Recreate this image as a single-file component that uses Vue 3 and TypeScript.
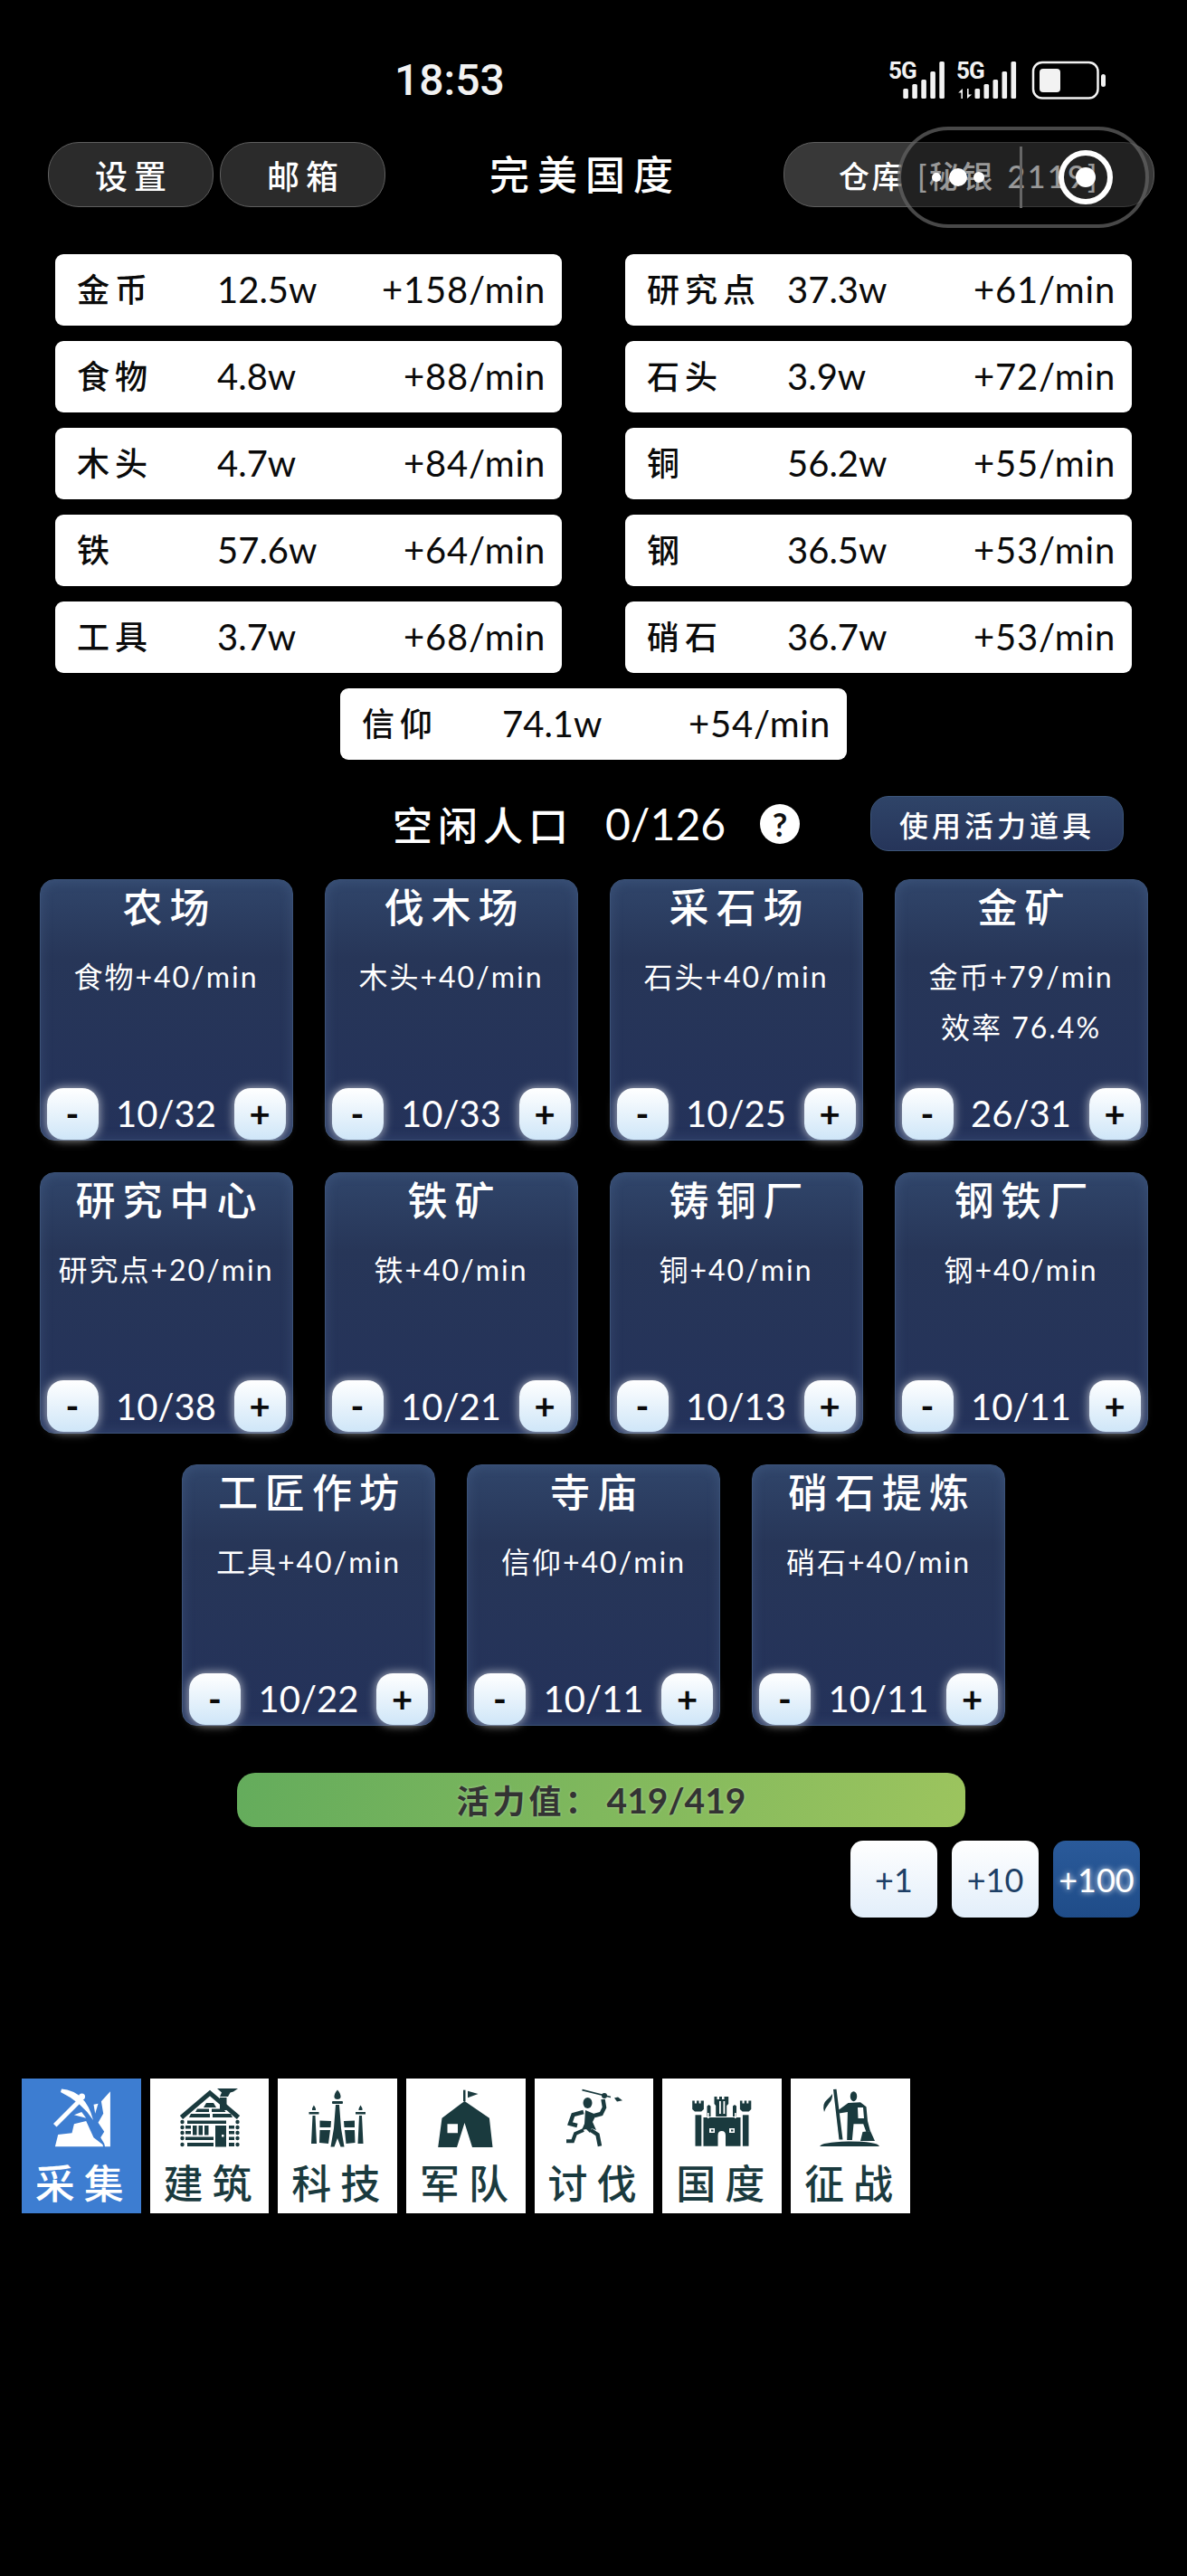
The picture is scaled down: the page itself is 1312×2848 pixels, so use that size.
<script setup lang="ts">
interface Resource { name: string; amount: string; rate: string }
interface Building { name: string; lines: string[]; count: string }

const resources: Resource[] = [
  { name: '金币', amount: '12.5w', rate: '+158/min' },
  { name: '研究点', amount: '37.3w', rate: '+61/min' },
  { name: '食物', amount: '4.8w', rate: '+88/min' },
  { name: '石头', amount: '3.9w', rate: '+72/min' },
  { name: '木头', amount: '4.7w', rate: '+84/min' },
  { name: '铜', amount: '56.2w', rate: '+55/min' },
  { name: '铁', amount: '57.6w', rate: '+64/min' },
  { name: '钢', amount: '36.5w', rate: '+53/min' },
  { name: '工具', amount: '3.7w', rate: '+68/min' },
  { name: '硝石', amount: '36.7w', rate: '+53/min' },
  { name: '信仰', amount: '74.1w', rate: '+54/min' },
]

const buildings: Building[] = [
  { name: '农场', lines: ['食物+40/min'], count: '10/32' },
  { name: '伐木场', lines: ['木头+40/min'], count: '10/33' },
  { name: '采石场', lines: ['石头+40/min'], count: '10/25' },
  { name: '金矿', lines: ['金币+79/min', '效率 76.4%'], count: '26/31' },
  { name: '研究中心', lines: ['研究点+20/min'], count: '10/38' },
  { name: '铁矿', lines: ['铁+40/min'], count: '10/21' },
  { name: '铸铜厂', lines: ['铜+40/min'], count: '10/13' },
  { name: '钢铁厂', lines: ['钢+40/min'], count: '10/11' },
  { name: '工匠作坊', lines: ['工具+40/min'], count: '10/22' },
  { name: '寺庙', lines: ['信仰+40/min'], count: '10/11' },
  { name: '硝石提炼', lines: ['硝石+40/min'], count: '10/11' },
]

const boosts = ['+1', '+10', '+100']
</script>

<template>
  <div class="page">
    <div class="status">
      <span class="clock">18:53</span>
      <svg class="status-icons" width="245" height="62" viewBox="980 50 245 62">
        <g fill="#f2f2f2">
          <text x="982" y="87" class="net">5G</text>
          <rect x="998.3" y="98" width="5.6" height="11" rx="1.5" />
          <rect x="1008.3" y="93" width="5.6" height="16" rx="1.5" />
          <rect x="1018.3" y="88" width="5.6" height="21" rx="1.5" />
          <rect x="1028.3" y="79" width="5.6" height="30" rx="1.5" />
          <rect x="1038.3" y="68" width="5.6" height="41" rx="1.5" />
          <text x="1057" y="87" class="net">5G</text>
          <path d="M1064 98v11h-1.6v-6.5h-3.2zM1069 109V98h1.6v6.5h3.6z" />
          <rect x="1077.5" y="98" width="5.6" height="11" rx="1.5" />
          <rect x="1087.5" y="93" width="5.6" height="16" rx="1.5" />
          <rect x="1097.5" y="88" width="5.6" height="21" rx="1.5" />
          <rect x="1107.5" y="79" width="5.6" height="30" rx="1.5" />
          <rect x="1117.5" y="68" width="5.6" height="41" rx="1.5" />
          <rect x="1149" y="76" width="23" height="26" rx="4" />
          <rect x="1217" y="82" width="5" height="14" rx="2.5" />
        </g>
        <rect x="1142" y="69" width="71.500" height="39.500" rx="10" fill="none" stroke="#f2f2f2" stroke-width="2.500" />
      </svg>
    </div>

    <header class="topbar">
      <button class="pill">设置</button>
      <button class="pill">邮箱</button>
      <h1 class="kingdom">完美国度</h1>
      <button class="pill store">仓库 [秘银 2119]</button>
      <div class="capsule">
        <span class="dot small"></span>
        <span class="dot large"></span>
        <span class="dot medium"></span>
        <span class="capsule-rule"></span>
        <span class="ring"><span class="ring-core"></span></span>
      </div>
    </header>

    <section class="stock">
      <div v-for="r in resources" :key="r.name" class="stock-row">
        <span class="stock-name">{{ r.name }}</span>
        <span class="stock-amount">{{ r.amount }}</span>
        <span class="stock-rate">{{ r.rate }}</span>
      </div>
    </section>

    <section class="population">
      <span class="pop-label">空闲人口</span>
      <span class="pop-value">0/126</span>
      <span class="help">?</span>
      <button class="use-item">使用活力道具</button>
    </section>

    <section class="buildings">
      <article v-for="b in buildings" :key="b.name" class="building">
        <h2 class="building-name">{{ b.name }}</h2>
        <p v-for="line in b.lines" :key="line" class="building-line">{{ line }}</p>
        <div class="workers">
          <button class="step">-</button>
          <span class="worker-count">{{ b.count }}</span>
          <button class="step">+</button>
        </div>
      </article>
    </section>

    <div class="energy"><span class="energy-label">活力值：</span><span class="energy-value">419/419</span></div>

    <div class="boosts">
      <button v-for="(b, i) in boosts" :key="b" class="boost" :class="{ picked: i === 2 }">{{ b }}</button>
    </div>

    <nav class="tabs">
      <a class="tab active">
        <!-- pickaxe striking a stepped cliff -->
        <svg class="tab-icon" viewBox="0 0 72 72" fill="currentColor">
          <path d="M67.900 7.300 57.900 18.300 60.200 31.700 54.500 41.700 61.200 51.700 57.200 58.300 61.200 65 62 68.300H67.900Z" />
          <path d="M6.900 68.300 10.200 55 25.500 53.300 27.900 43.300 41.200 40 49.500 58.300 59.500 66 60 68.300Z" />
          <path d="M49.500 21.700 54.500 20.700 51.200 31.700Z" />
          <path d="M27.900 33.300 36.200 30 41.200 36.700Z" />
          <path d="M14 4.500Q41 7 49 39 36 19 13 8Z" />
          <circle cx="36.500" cy="13" r="3.500" />
          <path d="M5 43 31.500 16.500 35 20 8.500 46.500Z" />
        </svg>
        <span class="tab-label">采集</span>
      </a>
      <a class="tab">
        <!-- log cabin with chimney -->
        <svg class="tab-icon" viewBox="0 0 72 72" fill="currentColor">
          <path d="M44 4H67L62 7.500 58.500 8.500 56 13H47L49 8.500Z" />
          <rect x="47" y="14" width="7.500" height="14" />
          <path d="M4.500 36 36 9 67.500 36" fill="none" stroke="currentColor" stroke-width="5" />
          <path d="M32 20h8l3 5H29zM22 26.500h13v3.500H20zM38 26.500h13l2.500 3.500H38zM15 32h21v4H13zM39 32h20l2 4H39z" />
          <path d="M11 39.500h43v3.500H11z" />
          <path d="M17 45h4.500v10.500H17zM23.500 45h4.500v10.500h-4.500zM30 45h4.500v10.500H30z" />
          <path d="M9 45h6v3.500H9zM9 51h6v3.500H9zM9 57.500h31V61H9zM11 64h29v4H11z" />
          <path d="M42 45h12v23.500H42z" />
          <path d="M57 45h6v3.500h-6zM57 51h6v3.500h-6zM57 57.500h6V61h-6zM57 64h6v4h-6z" />
          <circle cx="5.500" cy="41" r="2.200" /><circle cx="5.500" cy="47" r="2.200" /><circle cx="5.500" cy="53" r="2.200" />
          <circle cx="5.500" cy="59" r="2.200" /><circle cx="5.500" cy="66" r="2.200" />
          <circle cx="66.500" cy="41" r="2.200" /><circle cx="66.500" cy="47" r="2.200" /><circle cx="66.500" cy="53" r="2.200" />
          <circle cx="66.500" cy="59" r="2.200" /><circle cx="66.500" cy="66" r="2.200" />
          <rect x="49" y="55" width="2.500" height="2.500" fill="#fff" />
        </svg>
        <span class="tab-label">建筑</span>
      </a>
      <a class="tab">
        <!-- academy with three spires -->
        <svg class="tab-icon" viewBox="0 0 72 72" fill="currentColor">
          <path d="M36 5.500Q40 10 39.500 14 39 16 36 16 33 16 32.500 14 32 10 36 5.500Z" />
          <rect x="30" y="18" width="12" height="3" rx="1" />
          <path d="M34 22h4l2 26 3.500 20.500h-4L36 59l-3.500 9.500h-4L32 48z" />
          <path d="M9.900 22.500Q12.500 26 12 28H8Q7.500 26 9.900 22.500ZM61.600 22.500Q64 26 63.500 28H59.500Q59 26 61.600 22.500Z" />
          <rect x="4.500" y="30" width="11" height="2.500" /><rect x="56" y="30" width="11" height="2.500" />
          <path d="M8.500 34h3l1.500 31H7zM60 34h3l1.500 31H58.500z" />
          <path d="M16.500 39.500 29 40 28.500 47H16.500zM43 40 55 39.500V47H43.500z" />
          <path d="M16.500 50H28L26 65 16 64zM44 50H55L55.500 64 45.500 65z" />
        </svg>
        <span class="tab-label">科技</span>
      </a>
      <a class="tab">
        <!-- army tent with pennant -->
        <svg class="tab-icon" viewBox="0 0 72 72" fill="currentColor">
          <rect x="33" y="5.700" width="2.500" height="12.500" />
          <path d="M38 6.700 49.500 10 38 14.300Z" />
          <path fill-rule="evenodd" d="M34.500 18 61.900 36.700 65.500 69H43L34.500 42 26 69H5.200L9.500 36.700ZM15.500 43.300V53.300H27V43.300Z" />
        </svg>
        <span class="tab-label">军队</span>
      </a>
      <a class="tab">
        <!-- warrior raising a spear -->
        <svg class="tab-icon" viewBox="0 0 72 72" fill="currentColor">
          <path d="M22.500 5.700 54 13.500" fill="none" stroke="currentColor" stroke-width="1.800" />
          <path d="M58 14.500 62 13.500 67 17.300 61 18.500Z" />
          <circle cx="47" cy="12" r="3" />
          <ellipse cx="28.500" cy="20" rx="5" ry="6" />
          <path d="M45.500 16 47 25 43.500 32 36 34" fill="none" stroke="currentColor" stroke-width="4.500" />
          <path d="M24 30 12.500 33 9 43 17 45" fill="none" stroke="currentColor" stroke-width="4.500" />
          <path d="M26 28 38 33 34 41 38 50 33 48 31 53 27 49 22 50 25 43Z" />
          <path d="M24 50 15 54 12 62.300H5" fill="none" stroke="currentColor" stroke-width="4" />
          <path d="M32 50 39.500 55 42 67.700" fill="none" stroke="currentColor" stroke-width="4.500" />
        </svg>
        <span class="tab-label">讨伐</span>
      </a>
      <a class="tab">
        <!-- castle keep between two towers -->
        <svg class="tab-icon" viewBox="0 0 72 72" fill="currentColor">
          <path d="M3.200 17.500h2.600v3h2.200v-3h2.600v3h2v-3h3.300V27l-2.700 2.500H6L3.200 27z" />
          <path d="M55.900 17.500h2.600v3h2.200v-3h2.600v3h2v-3h3V27l-2.700 2.500H58.600L55.900 27z" />
          <rect x="6.500" y="33.300" width="6.800" height="34.400" />
          <rect x="58.900" y="33.300" width="6.600" height="34.400" />
          <path d="M27.500 13h3v3h2.500v-3h3v3h2.500v-3h4.700v8l-2 2V35h-12V23l-1.700-2z" fill-rule="evenodd" />
          <path d="M19.500 23.500l2-1.500 2 1.500V35h-4zM48 23.500l2-1.500 2 1.500V35h-4z" />
          <path fill-rule="evenodd" d="M15.500 36H56.500V67.700H40V56Q40 51 35.800 51 31.500 51 31.500 56V67.700H15.500ZM22 48V53H28V48ZM44 48V53H50V48Z" />
          <rect x="33" y="18" width="1.800" height="14" fill="#fff" />
          <rect x="37.500" y="18" width="1.800" height="14" fill="#fff" />
          <rect x="24" y="49.500" width="2.500" height="2" />
          <rect x="46" y="49.500" width="2.500" height="2" />
          <rect x="20" y="31" width="1.600" height="6" fill="#fff" />
          <rect x="50" y="31" width="1.600" height="6" fill="#fff" />
        </svg>
        <span class="tab-label">国度</span>
      </a>
      <a class="tab">
        <!-- conqueror with a banner on a hill -->
        <svg class="tab-icon" viewBox="0 0 72 72" fill="currentColor">
          <path d="M17 5 20.500 4.700 27.500 60.500 23.500 60.500Z" />
          <path d="M16 10Q16.500 16 12 21 8 26 7 30 4.500 21 9.500 17 14 13 16 10Z" />
          <ellipse cx="39.500" cy="12.700" rx="3.700" ry="5.500" />
          <path fill-rule="evenodd" d="M22.900 27.700 33.500 20 47 19.300 53.500 24.300 55 40 57.900 51 53.500 52.300 50.200 43.300H39.500L37.900 61H32.200L32.900 30 23.400 31.500ZM44 25 44.500 37 51 37 50 25Z" />
          <path d="M49.500 52 58 51 63 62H47Z" />
          <path d="M2.200 68Q3 63.500 34 62.500 66 62.500 68 68Z" />
        </svg>
        <span class="tab-label">征战</span>
      </a>
    </nav>
  </div>
</template>

<style scoped>
.page {
  position: relative;
  min-height: 2848px;
  background: #000;
  color: #fff;
  font-family: "Lato", "Noto Sans CJK SC", sans-serif;
}

button {
  font-family: inherit;
  padding: 0;
  cursor: pointer;
}

.status {
  display: flex;
  align-items: flex-end;
  height: 62px;
  padding: 50px 87px 0 436px;
}

.clock {
  font-family: "Roboto", sans-serif;
  font-size: 48px;
  font-weight: 500;
  color: #f2f2f2;
  line-height: 47px;
}

.status-icons {
  margin-left: auto;
  display: block;
}

.net {
  font-family: "Roboto", sans-serif;
  font-size: 26px;
  font-weight: 700;
  letter-spacing: -1px;
}

.topbar {
  position: relative;
  display: flex;
  align-items: center;
  height: 72px;
  margin-top: 45px;
  padding: 0 36px 0 53px;
}

.pill {
  width: 183px;
  height: 72px;
  margin-right: 7px;
  border: 1.500px solid #5f5f5f;
  border-radius: 34px;
  background: #2b2b2b;
  color: #fff;
  font-size: 36px;
  letter-spacing: 7px;
  font-weight: 500;
  text-indent: 7px;
}

.store {
  width: 410px;
  margin: 0 0 0 auto;
  background: #383838;
  letter-spacing: 2.400px;
  word-spacing: 3px;
  font-size: 34px;
  text-indent: 0;
}

.kingdom {
  margin: 0 0 0 108px;
  font-size: 44px;
  line-height: 1;
  font-weight: 500;
  letter-spacing: 9px;
}

.capsule {
  position: absolute;
  left: 992px;
  top: -17px;
  box-sizing: border-box;
  width: 278px;
  height: 112px;
  display: flex;
  align-items: center;
  padding-left: 34px;
  border: 4px solid rgba(120, 120, 120, 0.6);
  border-radius: 56px;
  background: rgba(0, 0, 0, 0.4);
}

.dot {
  flex: none;
  border-radius: 50%;
  background: #fff;
}

.dot.small { width: 10px; height: 10px; }
.dot.large { width: 20px; height: 20px; margin-left: 9px; }
.dot.medium { width: 12px; height: 12px; margin-left: 7px; }

.capsule-rule {
  flex: none;
  width: 3px;
  height: 68px;
  margin-left: 39px;
  background: #666;
}

.ring {
  flex: none;
  box-sizing: border-box;
  width: 60px;
  height: 60px;
  margin-left: 40px;
  display: flex;
  align-items: center;
  justify-content: center;
  border: 6px solid #fff;
  border-radius: 50%;
}

.ring-core {
  width: 22px;
  height: 22px;
  border-radius: 50%;
  background: #fff;
}

.stock {
  display: grid;
  grid-template-columns: 560px 560px;
  column-gap: 70px;
  row-gap: 17px;
  margin-top: 52px;
  padding-left: 61px;
}

.stock-row {
  box-sizing: border-box;
  display: flex;
  align-items: center;
  height: 79px;
  padding: 0 18px 2px 24px;
  border-radius: 9px;
  background: #fff;
  color: #0a0a0a;
}

.stock-row:last-child {
  grid-column: 1 / -1;
  justify-self: center;
  width: 560px;
}

.stock-name {
  width: 155px;
  flex: none;
  padding-bottom: 4px;
  font-size: 36px;
  letter-spacing: 6px;
  font-weight: 500;
}

.stock-amount {
  font-size: 40px;
}

.stock-rate {
  margin-left: auto;
  font-size: 40px;
  letter-spacing: 0.800px;
}

.population {
  display: flex;
  align-items: center;
  height: 61px;
  margin-top: 40px;
  padding-left: 434px;
}

.pop-label {
  font-size: 44px;
  letter-spacing: 6px;
  font-weight: 500;
}

.pop-value {
  margin-left: 35px;
  font-size: 48px;
}

.help {
  width: 44px;
  height: 44px;
  margin-left: 38px;
  border-radius: 50%;
  background: #fff;
  color: #111;
  font-size: 36px;
  font-weight: 700;
  line-height: 44px;
  text-align: center;
}

.use-item {
  width: 280px;
  height: 61px;
  margin-left: 78px;
  border: 1.500px solid #3c5579;
  border-radius: 20px;
  background: linear-gradient(180deg, #2f4468, #26355a);
  color: #fff;
  font-size: 32px;
  letter-spacing: 4px;
  font-weight: 500;
}

.buildings {
  display: flex;
  flex-wrap: wrap;
  justify-content: center;
  gap: 34.500px 35px;
  width: 1225px;
  margin: 31px auto 0;
}

.building {
  box-sizing: border-box;
  width: 280px;
  height: 289px;
  display: flex;
  flex-direction: column;
  padding: 0 7px 0.500px;
  border: 1.500px solid #3b5278;
  border-radius: 16px;
  background: linear-gradient(180deg, #30456a 0%, #273658 30%, #24325a 100%);
  box-shadow: inset 0 0 14px rgba(110, 140, 185, 0.22);
}

.building-name {
  margin: 5px 0 0;
  font-size: 44px;
  line-height: 50px;
  font-weight: 500;
  letter-spacing: 8px;
  text-indent: 8px;
  text-align: center;
  white-space: nowrap;
}

.building-name + .building-line {
  margin-top: 31px;
}

.building-line {
  margin: 14px 0 0;
  font-size: 32px;
  line-height: 42px;
  letter-spacing: 2px;
  text-align: center;
  white-space: nowrap;
}

.workers {
  display: flex;
  align-items: center;
  margin-top: auto;
}

.step {
  flex: none;
  width: 57px;
  height: 57px;
  border: none;
  border-radius: 18px;
  background: linear-gradient(180deg, #ffffff, #cfe6f8);
  box-shadow: 0 0 11px rgba(255, 255, 255, 0.7);
  color: #0a0a0a;
  font-size: 40px;
  font-weight: 700;
  line-height: 57px;
}

.worker-count {
  flex: 1;
  font-size: 40px;
  text-align: center;
}

.energy {
  width: 805px;
  height: 60px;
  margin: 52px 0 0 262px;
  border-radius: 20px;
  background: linear-gradient(100deg, #64ac5c, #9cc45e);
  color: #333;
  font-size: 36px;
  font-weight: 700;
  line-height: 60px;
  text-align: center;
  text-shadow: 0 0 3px rgba(255, 255, 255, 0.4);
}

.energy-label {
  letter-spacing: 4px;
}

.energy-value {
  margin-left: 6px;
  font-size: 39px;
}

.boosts {
  display: flex;
  justify-content: flex-end;
  gap: 16px;
  margin-top: 15px;
  padding-right: 52px;
}

.boost {
  width: 96px;
  height: 85px;
  border: none;
  border-radius: 14px;
  background: linear-gradient(180deg, #ffffff, #e2eefa);
  color: #1d3f66;
  font-size: 36px;
}

.boost.picked {
  background: linear-gradient(180deg, #2a5a9a, #1f4c88);
  color: #fff;
  text-shadow: 0 0 6px rgba(255, 255, 255, 0.9);
}

.tabs {
  display: flex;
  gap: 10px;
  margin-top: 178px;
  padding-left: 24px;
}

.tab {
  width: 131.700px;
  height: 149px;
  display: flex;
  flex-direction: column;
  align-items: center;
  padding-top: 7px;
  box-sizing: border-box;
  background: #fff;
  color: #1a3a3e;
}

.tab.active {
  background: #3d7dd1;
  color: #fff;
}

.tab-icon {
  width: 72px;
  height: 72px;
  flex: none;
}

.tab-label {
  margin-top: 9px;
  font-size: 44px;
  line-height: 56px;
  font-weight: 500;
  letter-spacing: 10px;
  margin-right: -6px;
  white-space: nowrap;
}
</style>

<style>
html,
body {
  margin: 0;
  background: #000;
}
</style>
